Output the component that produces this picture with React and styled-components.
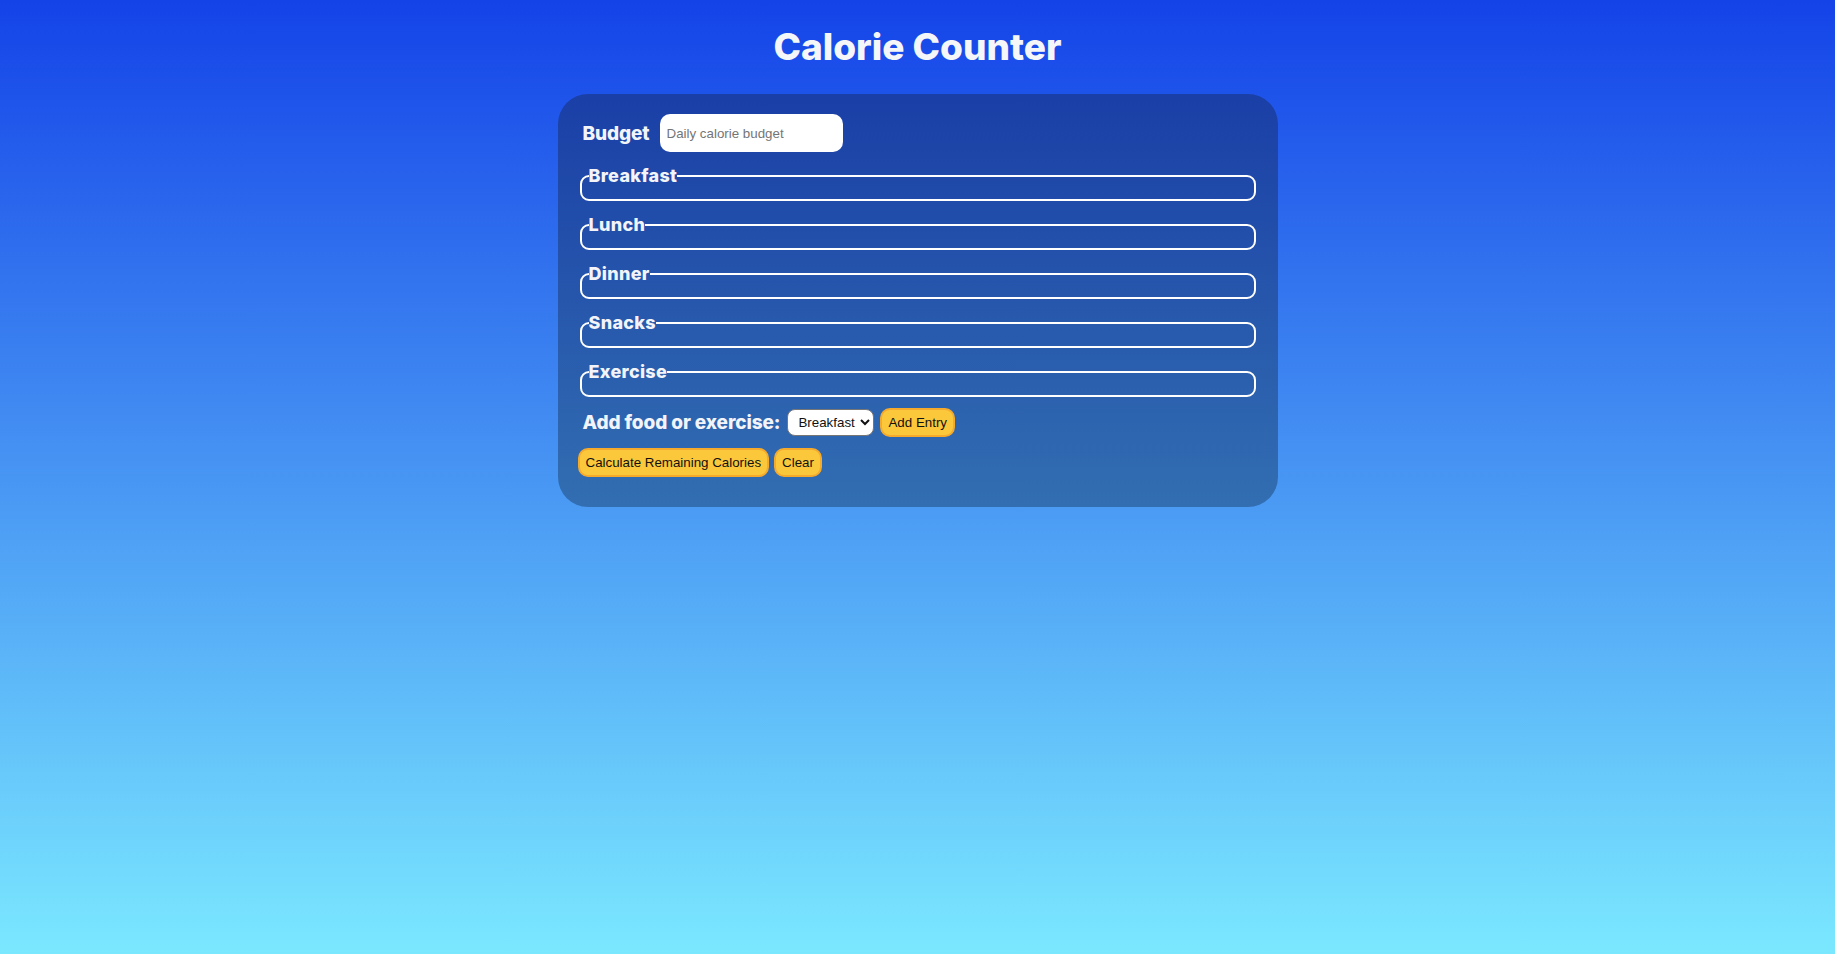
import React, { useState } from "react";
import styled, { createGlobalStyle } from "styled-components";

const GlobalStyle = createGlobalStyle`
  html, body {
    margin: 0;
    padding: 0;
    height: 100%;
  }
  body {
    background: linear-gradient(180deg, #1443e8 0%, #7be8ff 100%);
    font-family: "Inter", "Liberation Sans", sans-serif;
    color: #f5f6f7;
  }
`;

const Page = styled.main`
  display: flex;
  flex-direction: column;
  align-items: center;
`;

const Title = styled.h1`
  margin: 0;
  padding-top: 24px;
  font-size: 37px;
  line-height: 46px;
  font-weight: 800;
  color: #f5f6f7;
`;

const Card = styled.form`
  box-sizing: border-box;
  width: 720px;
  margin-top: 24px;
  padding: 20px 20px 30px;
  border-radius: 30px;
  background: linear-gradient(180deg, #1a3fa7 0%, #326eb1 100%);
  display: flex;
  flex-direction: column;
`;

const Row = styled.div`
  display: flex;
  align-items: center;
  height: ${(p) => p.$h}px;
  padding-left: ${(p) => (p.$indent ? 5 : 0)}px;
  margin-top: ${(p) => p.$top || 0}px;
  gap: ${(p) => p.$gap || 0}px;
`;

const Label = styled.label`
  font-size: 19px;
  font-weight: 800;
  letter-spacing: -0.1px;
  color: #f2f4fa;
  margin-right: ${(p) => p.$space}px;
`;

const BudgetInput = styled.input`
  box-sizing: border-box;
  width: 183px;
  height: 38px;
  border: none;
  border-radius: 10px;
  padding: 0 7px;
  font: 13.333px "Liberation Sans", Arial, sans-serif;
  color: #222;
  background: #fff;
  outline: none;
  &::placeholder {
    color: #757575;
  }
`;

const Meal = styled.fieldset`
  margin: 15px 2px 0;
  padding: 6px 6px 8px 7px;
  border: 2px solid #ffffff;
  border-radius: 9px;
  min-width: 0;
`;

const Legend = styled.legend`
  padding: 0;
  font-size: 18px;
  line-height: 18px;
  font-weight: 800;
  letter-spacing: 0.3px;
  color: #f2f4fa;
`;

const Select = styled.select`
  box-sizing: border-box;
  height: 27px;
  margin-right: 6px;
  padding: 0 2px 0 6px;
  border: 1px solid #767676;
  border-radius: 8px;
  background: #fff;
  color: #111;
  font: 13.333px "Liberation Sans", Arial, sans-serif;
`;

const Button = styled.button`
  box-sizing: border-box;
  height: 29px;
  padding: 0 6px;
  border: 2px solid #f5aa2c;
  border-radius: 10px;
  background: #fbc83c;
  color: #111;
  font: 13.333px "Liberation Sans", Arial, sans-serif;
  cursor: pointer;
`;

const meals = ["Breakfast", "Lunch", "Dinner", "Snacks", "Exercise"];

export default function App() {
  const [budget, setBudget] = useState("");
  const [entry, setEntry] = useState("breakfast");

  return (
    <>
      <GlobalStyle />
      <Page>
        <Title>Calorie Counter</Title>
        <Card onSubmit={(e) => e.preventDefault()}>
          <Row $h={38} $indent>
            <Label htmlFor="budget" $space={10}>Budget</Label>
            <BudgetInput
              id="budget"
              type="number"
              placeholder="Daily calorie budget"
              value={budget}
              onChange={(e) => setBudget(e.target.value)}
            />
          </Row>
          {meals.map((m) => (
            <Meal key={m} id={m.toLowerCase()}>
              <Legend>{m}</Legend>
            </Meal>
          ))}
          <Row $h={29} $top={11} $indent>
            <Label htmlFor="entry-dropdown" $space={7}>Add food or exercise:</Label>
            <Select id="entry-dropdown" value={entry} onChange={(e) => setEntry(e.target.value)}>
              {meals.map((m) => (
                <option key={m} value={m.toLowerCase()}>{m}</option>
              ))}
            </Select>
            <Button type="button">Add Entry</Button>
          </Row>
          <Row $h={29} $top={11} $gap={5}>
            <Button type="submit">Calculate Remaining Calories</Button>
            <Button type="button" onClick={() => setBudget("")}>Clear</Button>
          </Row>
        </Card>
      </Page>
    </>
  );
}
